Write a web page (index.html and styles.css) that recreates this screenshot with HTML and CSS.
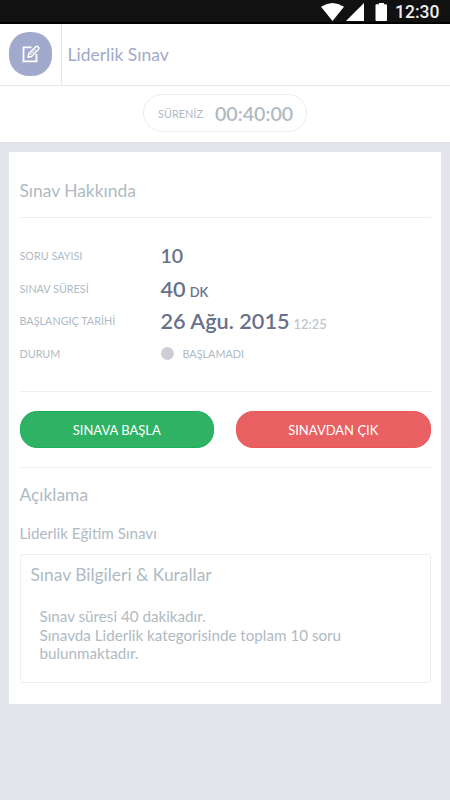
FILE: index.html
```
<!DOCTYPE html>
<html lang="tr">
<head>
<meta charset="utf-8">
<title>Liderlik Sınav</title>
<link rel="stylesheet" href="styles.css">
</head>
<body>
<div class="status">
  <svg class="status-icons" width="70" height="24" viewBox="0 0 70 24" fill="#fff">
    <path d="M1 6.700Q12.500-.7 24 6.700L12.500 21z"/>
    <path d="M44 3v18H26z"/>
    <path d="M59 3h5v1.200h2q1 0 1 1V20q0 1-1 1h-9.500q-1 0-1-1V5.200q0-1 1-1H59z"/>
  </svg>
  <span class="clock">12:30</span>
</div>
<header class="header">
  <div class="logo-cell">
    <div class="logo">
      <svg width="18" height="18" viewBox="0 0 18 18" fill="none" stroke="#fff">
        <path d="M9.500 2.300H1.500v14h13V9" stroke-width="1.800"/>
        <path d="M6.100 12.300l.6-3.500 7-7q1-1 2.200 0l.5.500q1.100 1 0 2.200l-6.900 7z" stroke-width="1.600" stroke-linejoin="round"/>
        <path d="M12.200 3.600l2.400 2.400M8.200 10l4.300-4.300" stroke-width="1"/>
      </svg>
    </div>
  </div>
  <h1 class="title">Liderlik Sınav</h1>
</header>
<div class="timer-bar">
  <div class="timer"><span class="timer-label">SÜRENİZ</span><span class="timer-value">00:40:00</span></div>
</div>
<main class="card">
  <h2 class="heading">Sınav Hakkında</h2>
  <dl class="facts">
    <dt>SORU SAYISI</dt><dd><b class="count">10</b></dd>
    <dt>SINAV SÜRESİ</dt><dd><b class="big">40</b><span class="unit">DK</span></dd>
    <dt>BAŞLANGIÇ TARİHİ</dt><dd><b class="big">26 Ağu. 2015</b><span class="hour">12:25</span></dd>
    <dt>DURUM</dt><dd class="state"><i class="dot"></i>BAŞLAMADI</dd>
  </dl>
  <div class="actions">
    <button class="btn start">SINAVA BAŞLA</button>
    <button class="btn exit">SINAVDAN ÇIK</button>
  </div>
  <h2 class="heading about">Açıklama</h2>
  <p class="name">Liderlik Eğitim Sınavı</p>
  <section class="rules">
    <h3>Sınav Bilgileri &amp; Kurallar</h3>
    <p>Sınav süresi 40 dakikadır.<br>Sınavda Liderlik kategorisinde toplam 10 soru<br>bulunmaktadır.</p>
  </section>
</main>
</body>
</html>
```
FILE: styles.css
```
* { box-sizing: border-box; margin: 0; padding: 0; }
body { height: 800px; overflow: hidden; background: #e1e5ea; font-family: Lato, sans-serif; color: #afbac3; }
.status { height: 24px; background: #111; border-bottom: 2px solid #000; display: flex; justify-content: flex-end; padding-right: 10px; }
.status-icons { flex: none; margin-right: 5px; }
.clock { width: 45px; font: 500 17.500px/25px Roboto, sans-serif; color: #eee; white-space: nowrap; }
.header { height: 62px; background: #fff; border-bottom: 1px solid #e6eaed; display: flex; }
.logo-cell { width: 62px; border-right: 1px solid #e4e8ee; padding: 8px 0 0 9px; }
.logo { width: 43px; height: 44px; border-radius: 20px; background: #a1a9cd; display: flex; align-items: center; justify-content: center; }
.title { padding-left: 5.500px; font-size: 17.500px; line-height: 61px; font-weight: 400; color: #a1a9cd; }
.timer-bar { height: 57px; background: #fff; border-bottom: 1px solid #dde2e7; display: flex; justify-content: center; padding-top: 8px; }
.timer { width: 164px; height: 38px; border: 1px solid #eaeced; border-radius: 19px; display: flex; align-items: center; padding-left: 14px; }
.timer-label { width: 57px; font-size: 10.900px; }
.timer-value { font-size: 19.600px; font-weight: 600; }
.card { margin: 9px 9px 0; height: 552px; background: #fff; padding: 0 10.500px; }
.heading { height: 66px; padding-top: 24px; font-size: 17.400px; line-height: 30px; font-weight: 400; border-bottom: 1px solid #eeeff0; }
.facts { height: 174px; padding-top: 22px; display: grid; grid-template-columns: 141px 1fr; grid-auto-rows: 32.500px; border-bottom: 1px solid #eeeff0; }
.facts dt { font-size: 10.800px; line-height: 32px; }
.facts dd { font-size: 10.800px; line-height: 32px; white-space: nowrap; }
.facts b { font-weight: 600; color: #68718a; }
.facts .count { font-size: 19.500px; }
.big { font-size: 21.700px; }
.unit { margin-left: 4px; font-size: 13px; font-weight: 600; color: #68718a; }
.hour { margin-left: 4px; font-size: 12.900px; font-weight: 600; color: #c2c5c9; }
.state { display: flex; align-items: center; }
.dot { width: 13px; height: 13px; border-radius: 50%; background: #cccdd5; margin-right: 9px; }
.actions { height: 76px; display: flex; justify-content: space-between; align-items: center; border-bottom: 1px solid #eeeff0; }
.btn { width: 194.500px; height: 37px; border: 1px solid; border-radius: 17px; font: 13px Lato, sans-serif; color: #fff; }
.start { background: #2fb264; border-color: #18b05d; }
.exit { background: #e96062; border-color: #eb575d; }
.about { height: 51px; padding-top: 12px; border: 0; }
.name { height: 35px; font-size: 15.200px; line-height: 28px; }
.rules { height: 129px; border: 1px solid #eeeff0; border-radius: 2px; padding: 5px 10px; }
.rules h3 { font-size: 17.400px; line-height: 30px; font-weight: 400; }
.rules p { padding: 17px 0 0 9px; font-size: 15.200px; line-height: 18.500px; white-space: nowrap; }
```
